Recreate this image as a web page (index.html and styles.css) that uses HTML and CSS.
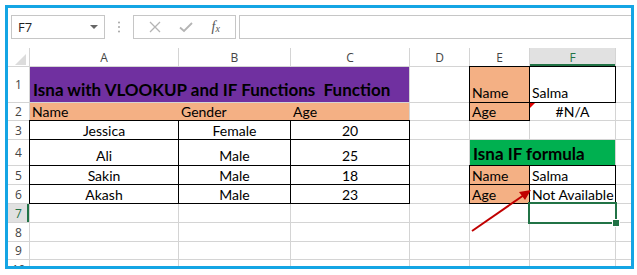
FILE: index.html
```html
<!DOCTYPE html>
<html lang="en">
<head>
    <meta charset="UTF-8">
    <title>Isna with VLOOKUP and IF</title>
    <link rel="stylesheet" href="styles.css">
</head>
<body>
<div class="frame">
    <!-- formula bar -->
    <div class="fbar">
        <div class="namebox">
            <span>F7</span>
            <span class="caret"></span>
        </div>
        <svg class="dots" width="4" height="12" viewBox="0 0 4 12">
            <circle cx="2" cy="1.5" r="1" fill="#a6a6a6"/>
            <circle cx="2" cy="6" r="1" fill="#a6a6a6"/>
            <circle cx="2" cy="10.5" r="1" fill="#a6a6a6"/>
        </svg>
        <div class="btns">
            <svg width="12" height="12" viewBox="0 0 12 12">
                <path d="M1 1 L11 11 M11 1 L1 11" stroke="#b4b4b4" stroke-width="1.3" fill="none"/>
            </svg>
            <svg width="14" height="12" viewBox="0 0 14 12">
                <path d="M1 6.5 L5 10 L13 2" stroke="#b4b4b4" stroke-width="1.8" fill="none"/>
            </svg>
            <span class="fx">f<sub>x</sub></span>
        </div>
        <div class="finput"></div>
    </div>

    <!-- sheet -->
    <div class="sheet">
        <div class="grid">
            <div class="corner"><span class="tri"></span></div>
            <div class="ch">A</div>
            <div class="ch">B</div>
            <div class="ch">C</div>
            <div class="ch">D</div>
            <div class="ch">E</div>
            <div class="ch sel">F</div>
            <div class="ch"></div>

            <div class="rh">1</div>
            <div class="title">Isna with VLOOKUP and IF Functions&nbsp; Function</div>
            <div class="c"></div>
            <div class="c lbl bottom">Name</div>
            <div class="c box bottom">Salma</div>
            <div class="c"></div>

            <div class="rh">2</div>
            <div class="band">
                <span>Name</span>
                <span>Gender</span>
                <span>Age</span>
            </div>
            <div class="c"></div>
            <div class="c lbl">Age</div>
            <div class="c mid err">#N/A</div>
            <div class="c"></div>

            <div class="rh">3</div>
            <div class="c d">Jessica</div>
            <div class="c d">Female</div>
            <div class="c d">20</div>
            <div class="c"></div>
            <div class="c"></div>
            <div class="c"></div>
            <div class="c"></div>

            <div class="rh">4</div>
            <div class="c d bottom">Ali</div>
            <div class="c d bottom">Male</div>
            <div class="c d bottom">25</div>
            <div class="c"></div>
            <div class="green">Isna IF formula</div>
            <div class="c"></div>

            <div class="rh">5</div>
            <div class="c d">Sakin</div>
            <div class="c d">Male</div>
            <div class="c d">18</div>
            <div class="c"></div>
            <div class="c lbl">Name</div>
            <div class="c box">Salma</div>
            <div class="c"></div>

            <div class="rh">6</div>
            <div class="c d">Akash</div>
            <div class="c d">Male</div>
            <div class="c d">23</div>
            <div class="c"></div>
            <div class="c lbl">Age</div>
            <div class="c box">Not Available</div>
            <div class="c"></div>

            <div class="rh sel">7</div>
            <div class="c"></div>
            <div class="c"></div>
            <div class="c"></div>
            <div class="c"></div>
            <div class="c"></div>
            <div class="c active"></div>
            <div class="c"></div>

            <div class="rh">8</div>
            <div class="c"></div>
            <div class="c"></div>
            <div class="c"></div>
            <div class="c"></div>
            <div class="c"></div>
            <div class="c"></div>
            <div class="c"></div>

            <div class="rh">9</div>
            <div class="c"></div>
            <div class="c"></div>
            <div class="c"></div>
            <div class="c"></div>
            <div class="c"></div>
            <div class="c"></div>
            <div class="c"></div>

            <div class="rh">10</div>
            <div class="c"></div>
            <div class="c"></div>
            <div class="c"></div>
            <div class="c"></div>
            <div class="c"></div>
            <div class="c"></div>
            <div class="c"></div>
        </div>

        <!-- red arrow drawn on top of the sheet -->
        <svg class="arrow" width="623" height="220" viewBox="0 0 623 220">
            <line x1="464" y1="183" x2="516" y2="147" stroke="#c00000" stroke-width="2"/>
            <polygon points="523,142 511,144 517,152" fill="#c00000"/>
        </svg>
    </div>
</div>
</body>
</html>
```

FILE: styles.css
```css
* {
    padding: 0;
    margin: 0;
    box-sizing: border-box;
}
body {
    background: white;
    font-family: "Lato", "Open Sans", sans-serif;
}
.frame {
    margin: 5px 0 0 5px;
    width: 629px;
    height: 264px;
    border: 3px solid #14a5e4;
    overflow: hidden;
}

/* formula bar */
.fbar {
    display: flex;
    align-items: center;
    height: 40px;
    padding: 7px 0 9px 3px;
}
.namebox {
    width: 94px;
    height: 24px;
    border: 1px solid #c6c6c6;
    display: flex;
    align-items: center;
    justify-content: space-between;
    padding: 0 6px 0 6px;
    font-family: "Open Sans", sans-serif;
    font-size: 13px;
    color: #222;
}
.caret {
    width: 0;
    height: 0;
    border-left: 4px solid transparent;
    border-right: 4px solid transparent;
    border-top: 4px solid #666;
}
.dots {
    margin: 0 12px 0 12px;
}
.btns {
    width: 103px;
    height: 24px;
    border: 1px solid #c6c6c6;
    display: flex;
    align-items: center;
    justify-content: space-around;
    padding: 0 6px 0 6px;
}
.fx {
    font-family: "Liberation Serif", serif;
    font-style: italic;
    font-size: 14px;
    color: #555;
}
.fx sub {
    font-size: 10px;
    vertical-align: -1px;
}
.finput {
    flex: 1;
    height: 24px;
    margin-left: 3px;
    border: 1px solid #c6c6c6;
    border-right: none;
}

/* sheet */
.sheet {
    position: relative;
}
.grid {
    display: grid;
    grid-template-columns: 21px 148px 111px 118px 59px 59px 85px 1fr;
    grid-template-rows: 18px 35px 17px 18px 25px 18px 18px 18px 18px 17px 18px;
    gap: 1px;
    background: #d4d4d4;
    font-size: 14px;
    color: #000;
}
.grid > div {
    background: white;
}
.corner {
    display: flex;
    align-items: flex-end;
    justify-content: flex-end;
    padding: 0 3px 1px 0;
}
.tri {
    width: 0;
    height: 0;
    border-left: 11px solid transparent;
    border-bottom: 11px solid #dcdcdc;
}
.ch {
    display: flex;
    align-items: center;
    justify-content: center;
    font-family: "Open Sans", sans-serif;
    font-size: 12px;
    color: #444;
}
.ch.sel {
    background: #e1e1e1 !important;
    box-shadow: inset 0 -2px 0 #217346;
    color: #217346;
}
.rh {
    display: flex;
    align-items: center;
    justify-content: center;
    font-family: "Open Sans", sans-serif;
    font-size: 12px;
    color: #444;
}
.rh.sel {
    background: #e1e1e1 !important;
    box-shadow: inset -2px 0 0 #217346;
    color: #217346;
}
.c {
    display: flex;
    align-items: center;
    padding: 0 2px;
    white-space: nowrap;
}
.bottom {
    align-items: flex-end;
    padding-bottom: 1px;
}
.mid {
    justify-content: center;
}
.d {
    justify-content: center;
    outline: 1px solid #000;
}
.title {
    grid-column: span 3;
    background: #7030a0 !important;
    display: flex;
    align-items: flex-end;
    padding: 0 0 2px 3px;
    font-weight: bold;
    font-size: 17px;
    white-space: pre;
}
.band {
    grid-column: span 3;
    background: #f4b084 !important;
    display: grid;
    grid-template-columns: 149px 112px 1fr;
    align-items: center;
    padding-left: 2px;
}
.lbl {
    background: #f4b084 !important;
    outline: 1px solid #000;
}
.box {
    outline: 1px solid #000;
}
.err {
    position: relative;
}
.err::before {
    content: "";
    position: absolute;
    left: 0;
    top: 0;
    border-top: 5px solid #e00000;
    border-right: 5px solid transparent;
}
.green {
    grid-column: span 2;
    background: #00b050 !important;
    display: flex;
    align-items: flex-end;
    padding: 0 0 1px 3px;
    font-weight: bold;
    font-size: 17px;
    white-space: nowrap;
}
.active {
    position: relative;
    outline: 2px solid #217346;
}
.active::after {
    content: "";
    position: absolute;
    right: -5px;
    bottom: -5px;
    width: 6px;
    height: 6px;
    background: #217346;
    border: 1px solid white;
}
.arrow {
    position: absolute;
    left: 0;
    top: 0;
    pointer-events: none;
}
```
